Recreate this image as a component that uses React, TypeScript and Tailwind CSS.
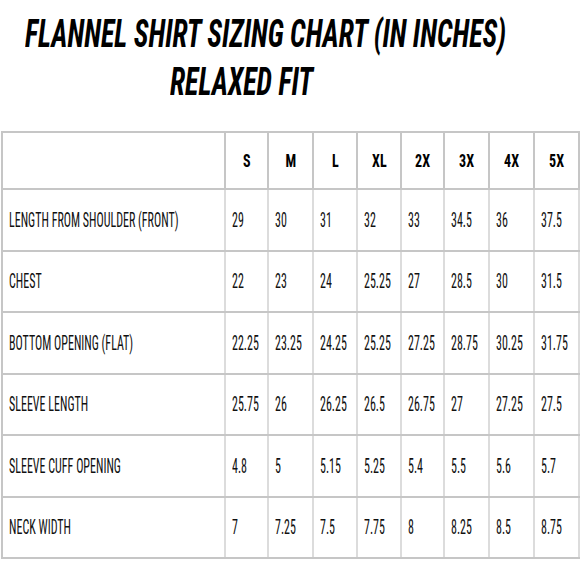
const sizes = ['S', 'M', 'L', 'XL', '2X', '3X', '4X', '5X']

const rows: [string, string[]][] = [
  ['LENGTH FROM SHOULDER (FRONT)', ['29', '30', '31', '32', '33', '34.5', '36', '37.5']],
  ['CHEST', ['22', '23', '24', '25.25', '27', '28.5', '30', '31.5']],
  ['BOTTOM OPENING (FLAT)', ['22.25', '23.25', '24.25', '25.25', '27.25', '28.75', '30.25', '31.75']],
  ['SLEEVE LENGTH', ['25.75', '26', '26.25', '26.5', '26.75', '27', '27.25', '27.5']],
  ['SLEEVE CUFF OPENING', ['4.8', '5', '5.15', '5.25', '5.4', '5.5', '5.6', '5.7']],
  ['NECK WIDTH', ['7', '7.25', '7.5', '7.75', '8', '8.25', '8.5', '8.75']],
]

const colWidths = ['w-[43px]', 'w-[45px]', 'w-[44px]', 'w-[44px]', 'w-[43px]', 'w-[45px]', 'w-[45px]', 'w-[45px]']

export default function App() {
  return (
    <div className="w-[580px] h-[580px] bg-white overflow-hidden font-['Roboto_Condensed',Roboto,sans-serif] text-black">
      <div className="pt-[10px] h-[131px]">
        <div className="pl-[25px] h-[48px] leading-[48px] text-[39px] font-bold italic whitespace-nowrap">
          <span className="inline-block origin-left scale-x-[0.72]">FLANNEL SHIRT SIZING CHART (IN INCHES)</span>
        </div>
        <div className="pl-[170px] h-[48px] leading-[48px] text-[39px] font-bold italic whitespace-nowrap">
          <span className="inline-block origin-left scale-x-[0.72]">RELAXED FIT</span>
        </div>
      </div>
      <table className="table-fixed border-collapse w-[578px] ml-px">
        <thead>
          <tr className="h-[57px]">
            <th className="w-[223px] border-2 border-[#c6c6c6]" />
            {sizes.map((s, i) => (
              <th key={s} className={`${colWidths[i]} border-2 border-[#c6c6c6] border-l-[#dcdcdc] text-[18px] font-bold whitespace-nowrap`}>
                <span className="inline-block scale-x-[0.78]">{s}</span>
              </th>
            ))}
          </tr>
        </thead>
        <tbody>
          {rows.map(([label, vals]) => (
            <tr key={label} className="h-[61.5px]">
              <td className="border-2 border-[#c6c6c6] border-r-[#dcdcdc] pl-[6px] text-[20px] text-[#111] whitespace-nowrap">
                <span className="inline-block origin-left scale-x-[0.6]">{label}</span>
              </td>
              {vals.map((v, i) => (
                <td key={i} className="border-2 border-[#c6c6c6] border-l-[#dcdcdc] border-r-[#dcdcdc] pl-[6px] text-[20px] text-[#111] whitespace-nowrap">
                  <span className="inline-block origin-left scale-x-[0.6]">{v}</span>
                </td>
              ))}
            </tr>
          ))}
        </tbody>
      </table>
    </div>
  )
}
